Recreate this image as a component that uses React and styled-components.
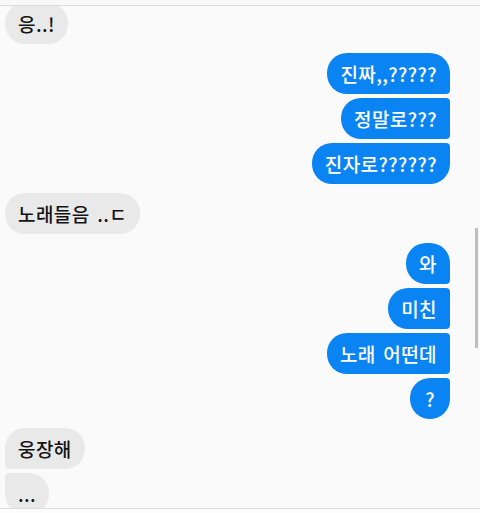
import React from 'react';
import styled, { createGlobalStyle, css } from 'styled-components';

const GlobalStyle = createGlobalStyle`
  html, body {
    margin: 0;
    padding: 0;
    background: #fafafa;
  }
  * {
    box-sizing: border-box;
  }
`;

const Screen = styled.div`
  position: relative;
  width: 480px;
  height: 513px;
  display: flex;
  flex-direction: column;
  background: #fafafa;
  font-family: 'Noto Sans CJK KR', 'Noto Sans', sans-serif;
  overflow: hidden;
`;

const TopEdge = styled.div`
  height: 6px;
  flex-shrink: 0;
  background: #f8f8f8;
  border-bottom: 1px solid #dcdcdc;
`;

const BottomEdge = styled.div`
  height: 5px;
  flex-shrink: 0;
  background: #fdfdfd;
  border-top: 1px solid #dcdcdc;
`;

const Viewport = styled.div`
  flex: 1;
  overflow: hidden;
`;

const Thread = styled.div`
  display: flex;
  flex-direction: column;
  gap: 9px;
  margin-top: -3px;
  padding: 0 30px 0 5px;
`;

const Group = styled.div`
  display: flex;
  flex-direction: column;
  gap: 4px;
  align-items: ${(p) => (p.mine ? 'flex-end' : 'flex-start')};
`;

const Bubble = styled.div`
  height: 41px;
  min-width: 40px;
  line-height: 41px;
  padding: 0 13px;
  text-align: center;
  font-size: 19px;
  font-weight: 500;
  letter-spacing: 0.4px;
  word-spacing: 3px;
  white-space: pre;
  border-radius: 20px;
  ${(p) =>
    p.mine
      ? css`
          background: #0b84f3;
          color: #ffffff;
          border-top-right-radius: ${p.first ? '20px' : '4px'};
          border-bottom-right-radius: ${p.last ? '20px' : '4px'};
        `
      : css`
          background: #e9e9e9;
          color: #141414;
          border-top-left-radius: ${p.first ? '20px' : '4px'};
          border-bottom-left-radius: ${p.last ? '20px' : '4px'};
        `}
`;

const Scrollbar = styled.div`
  position: absolute;
  right: 2px;
  top: 228px;
  width: 3px;
  height: 120px;
  background: #bdbdbd;
  border-radius: 1px;
`;

const groups = [
  { mine: false, lines: ['응..!'] },
  { mine: true, lines: ['진짜,,?????', '정말로???', '진자로??????'] },
  { mine: false, lines: ['노래들음 ..ㄷ'] },
  { mine: true, lines: ['와', '미친', '노래 어떤데', '?'] },
  { mine: false, lines: ['웅장해', '...'] },
];

export default function App() {
  return (
    <Screen>
      <GlobalStyle />
      <TopEdge />
      <Viewport>
        <Thread>
          {groups.map((g, gi) => (
            <Group key={gi} mine={g.mine}>
              {g.lines.map((text, i) => (
                <Bubble
                  key={i}
                  mine={g.mine}
                  first={i === 0}
                  last={i === g.lines.length - 1}
                >
                  {text}
                </Bubble>
              ))}
            </Group>
          ))}
        </Thread>
      </Viewport>
      <BottomEdge />
      <Scrollbar />
    </Screen>
  );
}
